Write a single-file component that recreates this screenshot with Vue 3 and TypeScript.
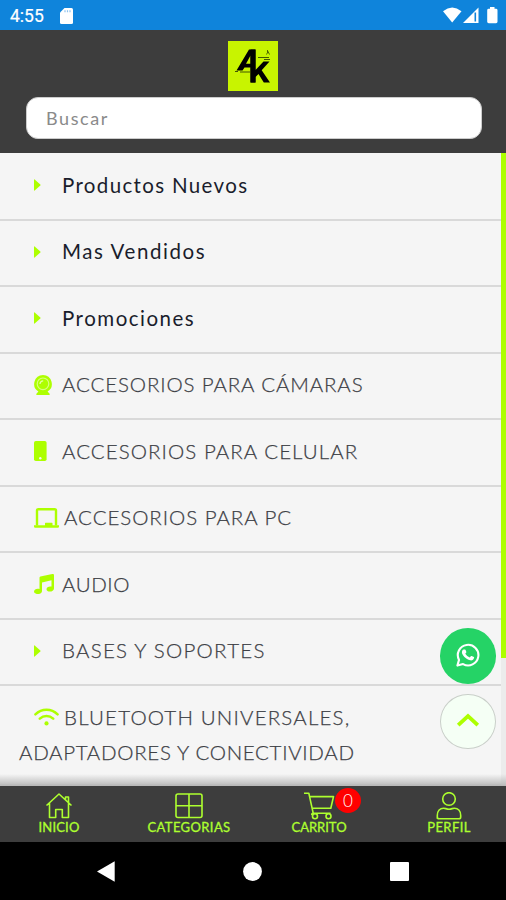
<script setup lang="ts">
interface Row {
  icon: 'caret' | 'webcam' | 'phone' | 'laptop' | 'music' | 'wifi'
  lines: { text: string; spacing: number }[]
  strong?: boolean
}

const rows: Row[] = [
  { icon: 'caret', strong: true, lines: [{ text: 'Productos Nuevos', spacing: 1.35 }] },
  { icon: 'caret', strong: true, lines: [{ text: 'Mas Vendidos', spacing: 1.58 }] },
  { icon: 'caret', strong: true, lines: [{ text: 'Promociones', spacing: 1.5 }] },
  { icon: 'webcam', lines: [{ text: 'ACCESORIOS PARA CÁMARAS', spacing: 0.87 }] },
  { icon: 'phone', lines: [{ text: 'ACCESORIOS PARA CELULAR', spacing: 1.06 }] },
  { icon: 'laptop', lines: [{ text: 'ACCESORIOS PARA PC', spacing: 0.95 }] },
  { icon: 'music', lines: [{ text: 'AUDIO', spacing: 0.55 }] },
  { icon: 'caret', lines: [{ text: 'BASES Y SOPORTES', spacing: 1.25 }] },
  {
    icon: 'wifi',
    lines: [
      { text: 'BLUETOOTH UNIVERSALES,', spacing: 1.18 },
      { text: 'ADAPTADORES Y CONECTIVIDAD', spacing: 0.69 },
    ],
  },
]
</script>

<template>
  <div class="screen">
    <div class="status">
      <span class="clock">4:55</span>
      <svg class="sd" width="13" height="16" viewBox="0 0 13 16"><path d="M4.5 0H11.5Q13 0 13 1.5V14.5Q13 16 11.5 16H1.5Q0 16 0 14.5V4.5Z" fill="#fff" /><path d="M5 2.2v2M7.5 2.2v2M10 2.2v2" stroke="#8fc4ef" stroke-width="1.2" /></svg>
      <svg class="signals" width="56" height="17" viewBox="0 0 56 17" fill="#fff">
        <path d="M0 4.2Q9.2-3 18.5 4.2L9.2 15.5Z" />
        <path d="M35.5 .5V16H20Z" />
        <path d="M32.3 5.5V14.5" stroke="#0f84db" stroke-width="1.6" />
        <path d="M47 1.8V0H51.5V1.8H53Q54.5 1.8 54.5 3.2V14.8Q54.5 16.2 53 16.2H45.7Q44.2 16.2 44.2 14.8V3.2Q44.2 1.8 45.7 1.8Z" />
      </svg>
    </div>

    <header class="head">
      <svg class="logo" width="50" height="50" viewBox="0 0 50 50">
        <rect width="50" height="50" fill="#c8f400" />
        <path d="M8.5 29.5L21 8.5H27.5V41.5H22.5V26.5H16.5L14.5 29.5ZM18 22.8H22.5V14.5Z" fill="#000" />
        <path d="M27.5 8.5V29L35.5 20.5H41.5L33.7 29.3L42 41.5H35.8L30.5 33L27.5 36V41.5H22.5V8.5Z" fill="#000" />
        <path d="M7 30.5h3M12 31h10M30 16.5h11M36 18.5h6" stroke="#334600" stroke-width=".9" />
        <path d="M38.5 13.5L40 10.5L41.5 13.5M39.5 9v2" fill="none" stroke="#334600" stroke-width=".8" />
      </svg>
      <div class="search">Buscar</div>
    </header>

    <main class="content">
      <ul class="list">
        <li v-for="row in rows" :key="row.lines[0].text" class="row" :class="{ strong: row.strong }">
          <div class="first">
            <span class="icon" :class="row.icon">
              <svg v-if="row.icon === 'caret'" width="7" height="12" viewBox="0 0 7 12"><path d="M0 .8Q0-.2 1 .7L6.3 5.5Q6.8 6 6.3 6.5L1 11.3Q0 12.2 0 11.2Z" /></svg>
              <svg v-else-if="row.icon === 'webcam'" width="18" height="20" viewBox="0 0 18 20"><path d="M9 0A9 9 0 0 1 13.6 16.6L15.8 19Q16 20 15 20H3Q2 20 2.2 19L4.4 16.6A9 9 0 0 1 9 0Z" /><circle cx="9" cy="8.8" r="5.8" fill="none" stroke="#d8ff80" stroke-width="1.2" /><path d="M6 9A3.2 3.2 0 0 1 9.2 5.8" fill="none" stroke="#e4ffa8" stroke-width="1.3" /></svg>
              <svg v-else-if="row.icon === 'phone'" width="13" height="20" viewBox="0 0 13 20"><rect width="12.6" height="20" rx="1.8" /><circle cx="6.3" cy="17.3" r="1.2" fill="#f5f5f5" /></svg>
              <svg v-else-if="row.icon === 'laptop'" width="25" height="20" viewBox="0 0 25 20"><path d="M3 17.5V2.5Q3 1.2 4.3 1.2H20.7Q22 1.2 22 2.5V17.5" fill="none" stroke="#adff00" stroke-width="2.4" /><path d="M0 17.2H11V15.2Q11 14.7 11.5 14.7H18Q18.5 14.7 18.5 15.2V17.2H25V18.5Q25 19.8 23.7 19.8H1.3Q0 19.8 0 18.5Z" /></svg>
              <svg v-else-if="row.icon === 'music'" width="20" height="20" viewBox="0 0 20 20"><path d="M5.5 3.7Q5.5 2.8 6.4 2.5L18.3 0Q20 -.2 20 1.2V14.5C20 18.4 12.5 18.6 12.5 15.3C12.5 12.8 15.4 12 17.5 12.6V6.2L8 8.4V17C8 21 0 21 0 17.6C0 15.2 3 14.2 5.5 15Z" /></svg>
              <svg v-else width="25" height="18" viewBox="0 0 25 18" fill="none" stroke="#adff00" stroke-width="2.5" stroke-linecap="round"><path d="M1.4 6.3C7.7.1 17.3.1 23.6 6.3M5.8 10.7C9.7 7.1 15.3 7.1 19.2 10.7" /><circle cx="12.5" cy="15.4" r="2.1" fill="#adff00" stroke="none" /></svg>
            </span>
            <span :style="{ letterSpacing: row.lines[0].spacing + 'px' }">{{ row.lines[0].text }}</span>
          </div>
          <div v-for="line in row.lines.slice(1)" :key="line.text" class="next" :style="{ letterSpacing: line.spacing + 'px' }">{{ line.text }}</div>
        </li>
      </ul>
      <div class="track"><div class="thumb"></div></div>
      <div class="fade"></div>
      <div class="floats">
        <div class="float whatsapp">
          <svg width="24" height="24" viewBox="0 0 24 24"><path d="M1.4 22.6L3 16.9A10.3 10.3 0 1 1 7.1 21.1Z" fill="none" stroke="#fff" stroke-width="2.1" stroke-linejoin="round" /><path d="M7.8 6.4H9Q9.4 6.4 9.6 6.9L10.4 8.9Q10.5 9.3 10.2 9.6L9.3 10.8Q11 13.6 13.8 14.6L15 13.1Q15.3 12.8 15.7 13L17.9 14.1Q18.2 14.3 18.1 14.8C17.8 16.7 16 17.7 14.2 17.3C9.8 16.3 6 12.1 5.9 9.2Q5.9 7.6 7 6.7Q7.4 6.4 7.8 6.4Z" fill="#fff" /></svg>
        </div>
        <div class="float top">
          <svg width="24" height="15" viewBox="0 0 24 15"><path d="M2.2 12.2L12 3L21.8 12.2" fill="none" stroke="#adff00" stroke-width="3.8" /></svg>
        </div>
      </div>
    </main>

    <nav class="tabs">
      <div class="tab">
        <svg width="28" height="28" viewBox="0 0 28 28"><path d="M1.5 13.5L14 2L26.5 13.5M20.5 7.8V5H23.5V10.5M4.5 11V25.5H10.7V17.5H17.3V25.5H23.5V11" /></svg>
        <span class="inicio">INICIO</span>
      </div>
      <div class="tab">
        <svg width="28" height="28" viewBox="0 0 28 28"><rect x="1" y="2" width="26" height="23.5" rx="2" /><path d="M14 2V25.5M1 13.7H27" /></svg>
        <span class="categorias">CATEGORIAS</span>
      </div>
      <div class="tab">
        <svg width="32" height="28" viewBox="0 0 32 28"><path d="M1 1.2H5.8L10.2 21.2H27.5M6.7 4.6H30.5L27.8 16.2H9.2M10.2 21.2Q8.5 21.2 8.8 23" /><circle cx="12" cy="24.3" r="2.5" /><circle cx="25.5" cy="24.3" r="2.5" /></svg>
        <span class="carrito">CARRITO</span>
        <b class="badge">0</b>
      </div>
      <div class="tab">
        <svg width="28" height="28" viewBox="0 0 28 28"><circle cx="14" cy="7" r="6.3" /><path d="M2.3 26.8V23.5C2.3 18.8 5.2 16.2 8.5 16.2C10.3 16.2 11.5 17.2 14 17.2S17.7 16.2 19.5 16.2C22.8 16.2 25.7 18.8 25.7 23.5V25Q25.7 26.8 23.9 26.8H4.1Q2.3 26.8 2.3 25" /></svg>
        <span class="perfil">PERFIL</span>
      </div>
    </nav>

    <div class="system">
      <svg width="18" height="21" viewBox="0 0 18 21"><path d="M17.7.2V20.8L0 10.5Z" /></svg>
      <svg width="19" height="19" viewBox="0 0 19 19"><circle cx="9.5" cy="9.5" r="9.4" /></svg>
      <svg width="19" height="19" viewBox="0 0 19 19"><rect width="19" height="19" rx="1" /></svg>
    </div>
  </div>
</template>

<style>
body {
  margin: 0;
}
</style>

<style scoped>
.screen {
  width: 506px;
  height: 900px;
  display: flex;
  flex-direction: column;
  overflow: hidden;
  font-family: Lato, 'Liberation Sans', sans-serif;
  background: #f5f5f5;
}
.status {
  height: 30px;
  flex: none;
  box-sizing: border-box;
  padding: 1px 7px 0 10px;
  display: flex;
  align-items: center;
  background: #0f84db;
  color: #fff;
}
.clock {
  width: 50px;
  font: 400 17.5px/30px Roboto, sans-serif;
  -webkit-text-stroke: 0.2px #fff;
}
.signals {
  margin-left: auto;
}
.head {
  height: 123px;
  flex: none;
  box-sizing: border-box;
  padding: 11px 24px 0 26px;
  display: flex;
  flex-direction: column;
  align-items: center;
  gap: 6px;
  background: #3d3d3d;
}
.logo {
  flex: none;
  margin-right: 2px;
}
.search {
  width: 100%;
  height: 42px;
  box-sizing: border-box;
  padding-left: 19px;
  border: 1px solid #ccc;
  border-radius: 12px;
  background: #fff;
  color: #8a8a8a;
  font-size: 18px;
  line-height: 41px;
  letter-spacing: 1.6px;
}
.content {
  height: 633px;
  flex: none;
  display: flex;
  position: relative;
  overflow: hidden;
}
.list {
  flex: 1;
  margin: 0;
  padding: 1px 0 0;
  list-style: none;
}
.row {
  box-sizing: border-box;
  min-height: 66.5px;
  padding: 13.5px 0 14px 19px;
  border-bottom: 2px solid #d9d9d9;
  color: #3d4045;
  font-size: 20.5px;
  font-weight: 300;
  line-height: 35.2px;
  white-space: nowrap;
  -webkit-text-stroke: 0.25px #3d4045;
}
.row.strong {
  color: #1a1d2c;
  font-weight: 400;
  -webkit-text-stroke: 0;
}
.first {
  display: flex;
  align-items: center;
  padding-left: 15px;
}
.icon {
  width: 28px;
  display: flex;
  fill: #adff00;
  -webkit-text-stroke: 0;
}
.icon.laptop,
.icon.wifi {
  width: 30px;
}
.track {
  width: 5px;
  background: #ececec;
}
.thumb {
  height: 505px;
  background: #adff00;
}
.fade {
  position: absolute;
  left: 0;
  right: 0;
  bottom: 0;
  height: 12px;
  background: linear-gradient(rgba(190, 190, 190, 0), #b8b8b8);
}
.floats {
  position: absolute;
  right: 10px;
  top: 475px;
  display: flex;
  flex-direction: column;
  gap: 10px;
}
.float {
  width: 56px;
  height: 55.5px;
  box-sizing: border-box;
  border-radius: 50%;
  display: flex;
  align-items: center;
  justify-content: center;
}
.whatsapp {
  background: #25d366;
}
.whatsapp svg {
  margin-bottom: 2px;
}
.top {
  border: 1px solid #c9cfc9;
  background: #f5fff5;
}
.top svg {
  margin-bottom: 2px;
}
.tabs {
  height: 56px;
  flex: none;
  display: grid;
  grid-template-columns: 118px 142px 118px 142px;
  background: #3d3d3d;
}
.tab {
  position: relative;
  padding-top: 6px;
  display: flex;
  flex-direction: column;
  align-items: center;
  color: #adff2f;
  font-size: 13px;
  line-height: 15px;
  white-space: nowrap;
  -webkit-text-stroke: 0.3px #adff2f;
}
.tab svg {
  fill: none;
  stroke: #adff2f;
  stroke-width: 1.6;
  stroke-linejoin: round;
}
.inicio {
  letter-spacing: 0.2px;
}
.categorias,
.perfil {
  letter-spacing: 0.4px;
}
.badge {
  position: absolute;
  left: 75px;
  top: 2px;
  width: 26px;
  height: 25px;
  border-radius: 50%;
  background: #f00;
  color: #fff;
  font-size: 17px;
  font-weight: 300;
  line-height: 25px;
  text-align: center;
  -webkit-text-stroke: 0;
}
.system {
  height: 58px;
  flex: none;
  box-sizing: border-box;
  padding: 0 97px;
  display: flex;
  align-items: center;
  justify-content: space-between;
  background: #000;
  fill: #fff;
}
</style>
